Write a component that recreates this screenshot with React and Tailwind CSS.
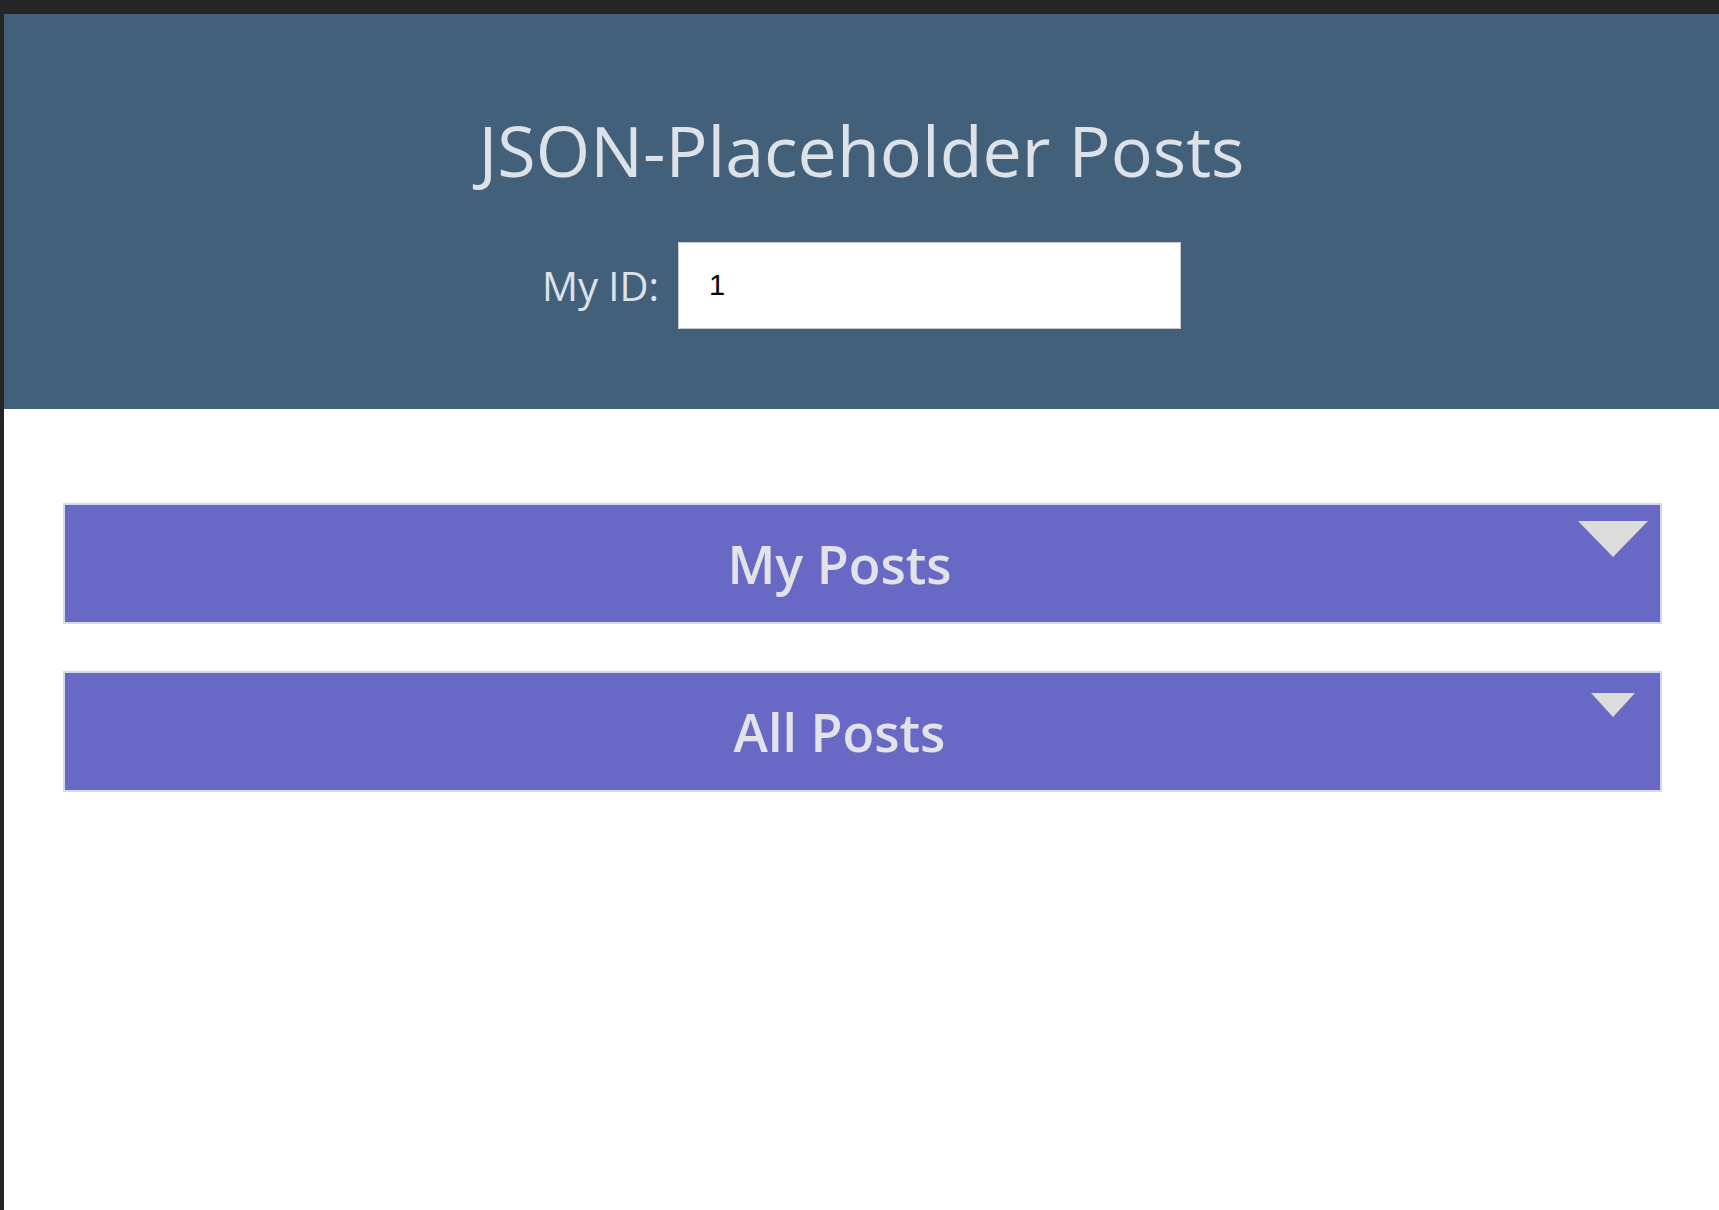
import React, { useState } from 'react'

const Panel = ({ title, big }) => {
  return (
    <div className="relative flex h-[121px] items-center justify-center border-2 border-[#d6d6ee] bg-[#6869c4] pr-[46px]">
      <h2 className="text-[52px] font-semibold leading-none text-[#e2e2e8]">{title}</h2>
      {big ? (
        <div className="absolute right-[12px] top-[16px] h-0 w-0 border-x-[35px] border-t-[36px] border-x-transparent border-t-[#dcdcdc]" />
      ) : (
        <div className="absolute right-[25px] top-[20px] h-0 w-0 border-x-[22px] border-t-[24px] border-x-transparent border-t-[#dcdcdc]" />
      )}
    </div>
  )
}

export default function App() {
  const [myId, setMyId] = useState('1')

  return (
    <div className="min-h-screen bg-[#252526] pl-[4px] pt-[14px] font-['Open_Sans',sans-serif]">
      <div className="flex min-h-[1196px] flex-col bg-white">
        {/* header */}
        <header className="flex h-[395px] flex-col items-center bg-[#43607b] pt-[101px]">
          <h1 className="text-[70px] font-normal leading-none text-[#dde2e8]">JSON-Placeholder Posts</h1>
          <div className="mt-[57px] flex items-center gap-[19px]">
            <label htmlFor="myId" className="text-[40px] font-normal text-[#dde2e8]">My ID:</label>
            <input
              id="myId"
              value={myId}
              onChange={e => setMyId(e.target.value)}
              className="h-[87px] w-[503px] border border-[#c8ccd2] bg-white px-[30px] font-['Liberation_Sans',sans-serif] text-[29px] text-black outline-none"
            />
          </div>
        </header>

        {/* posts */}
        <main className="ml-[59px] mr-[57px] mt-[94px] flex flex-col gap-[47px]">
          <Panel title="My Posts" big />
          <Panel title="All Posts" />
        </main>
      </div>
    </div>
  )
}
